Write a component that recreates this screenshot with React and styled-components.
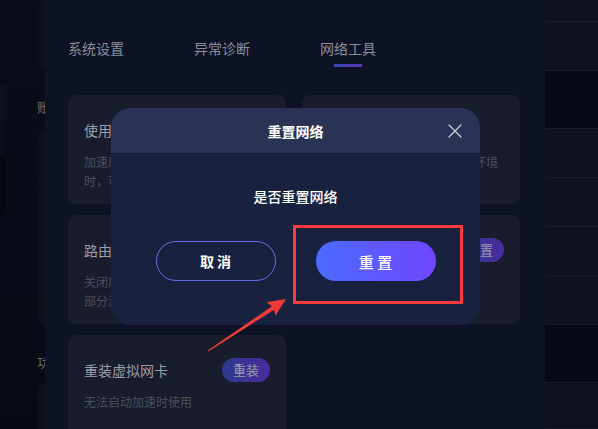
import styled, { createGlobalStyle } from "styled-components";

const GlobalStyle = createGlobalStyle`
  html, body {
    margin: 0;
    padding: 0;
    background: #080b15;
  }
  * {
    box-sizing: border-box;
  }
`;

const Screen = styled.div`
  position: relative;
  width: 598px;
  height: 429px;
  overflow: hidden;
  display: flex;
  background: linear-gradient(180deg, #0a0d19 0%, #070a13 100%);
  font-family: "Noto Sans CJK SC", "Noto Sans", sans-serif;
`;

/* ---- backdrop: the app behind the settings panel ---- */

const LeftRail = styled.div`
  width: 45px;
  flex: none;
  display: flex;
  justify-content: space-between;
`;

const EdgeStrip = styled.div`
  width: 5px;
  display: flex;
  flex-direction: column;
`;

const EdgeBlock = styled.div`
  height: ${(p) => p.$h}px;
  background: ${(p) => p.$bg};
`;

const GhostColumn = styled.div`
  width: 8px;
  overflow: hidden;
  display: flex;
  flex-direction: column;
`;

const GhostCard = styled.div`
  width: 80px;
  height: ${(p) => p.$h}px;
  flex: none;
  background: #0e1019;
  border-radius: 8px;
`;

const GhostLabel = styled.div`
  width: 80px;
  height: ${(p) => p.$h}px;
  flex: none;
  padding-top: 27px;
  font-size: 13px;
  line-height: 20px;
  color: #6b6e78;
  white-space: nowrap;
`;

const RightRail = styled.div`
  flex: 1;
  display: flex;
  flex-direction: column;
`;

const ListRow = styled.div`
  height: ${(p) => p.$h}px;
  flex: none;
  background: ${(p) => (p.$dark ? "#070a16" : "#0f121c")};
  border-bottom: 1px solid #191c27;
`;

/* ---- settings panel ---- */

const Panel = styled.div`
  width: 500px;
  flex: none;
  display: flex;
  flex-direction: column;
  background: #0d1225;
`;

const TopStrip = styled.div`
  height: 4px;
  background: #171c30;
`;

const Tabs = styled.div`
  display: flex;
  gap: 70px;
  padding: 0 23px;
  margin-top: 38px;
`;

const Tab = styled.div`
  display: flex;
  flex-direction: column;
  align-items: center;
  font-size: 14px;
  line-height: 20px;
  color: #8b8e99;

  &::after {
    content: "";
    width: 28px;
    height: 3px;
    margin-top: 6px;
    background: ${(p) =>
      p.$active ? "linear-gradient(90deg, #3848b6, #5733ad)" : "transparent"};
  }
`;

const Grid = styled.div`
  display: grid;
  grid-template-columns: 218px 218px;
  grid-auto-rows: 109px;
  gap: 11px 16px;
  padding: 0 23px;
  margin-top: 28px;
`;

const Card = styled.div`
  background: #191c2d;
  border-radius: 8px;
  padding: 25px 16px 0;
  display: flex;
  flex-direction: column;
`;

const CardHead = styled.div`
  height: 20px;
  display: flex;
  align-items: center;
  justify-content: space-between;
`;

const CardTitle = styled.div`
  font-size: 14px;
  line-height: 20px;
  color: #9c9ea8;
  white-space: nowrap;
`;

const CardDesc = styled.div`
  margin-top: 12px;
  font-size: 12px;
  line-height: 19px;
  color: #4b4e5d;
`;

const Toggle = styled.div`
  width: 36px;
  height: 16px;
  margin: -3px 8px 0 0;
  border-radius: 8px;
  background: #04050b;
`;

const PillButton = styled.button`
  width: 48px;
  height: 24px;
  flex: none;
  border: none;
  border-radius: 12px;
  padding: 0;
  background: linear-gradient(90deg, #2c3a8e, #4a2b9d);
  color: #9a9cac;
  font-family: inherit;
  font-size: 13px;
  line-height: 24px;
`;

/* ---- dialog ---- */

const Dialog = styled.div`
  position: absolute;
  left: 111px;
  top: 108px;
  width: 369px;
  height: 217px;
  border-radius: 20px;
  overflow: hidden;
  background: #18223f;
  display: flex;
  flex-direction: column;
`;

const DialogHeader = styled.div`
  height: 45px;
  flex: none;
  display: grid;
  grid-template-columns: 1fr auto 1fr;
  align-items: center;
  background: #2a3354;
`;

const DialogTitle = styled.div`
  grid-column: 2;
  font-size: 14px;
  font-weight: 700;
  line-height: 20px;
  color: #ffffff;
`;

const CloseButton = styled.button`
  justify-self: end;
  margin-right: 18px;
  width: 14px;
  height: 14px;
  padding: 0;
  border: none;
  background: none;
  display: flex;
`;

const DialogBody = styled.div`
  display: flex;
  flex-direction: column;
  align-items: center;
  padding-top: 33px;
`;

const Message = styled.div`
  font-size: 14px;
  font-weight: 500;
  line-height: 20px;
  color: #ffffff;
`;

const ButtonRow = styled.div`
  display: flex;
  gap: 40px;
  margin-top: 35px;
`;

const DialogButton = styled.button`
  width: 120px;
  height: 40px;
  border-radius: 20px;
  padding: 0;
  font-family: inherit;
  color: #ffffff;
  font-size: ${(p) => (p.$primary ? "15px" : "14px")};
  font-weight: ${(p) => (p.$primary ? 500 : 700)};
  border: ${(p) => (p.$primary ? "none" : "1px solid #6570e4")};
  background: ${(p) =>
    p.$primary ? "linear-gradient(90deg, #4b6bff, #7046ff)" : "transparent"};
`;

/* ---- annotation ---- */

const Highlight = styled.div`
  position: absolute;
  left: 293px;
  top: 225px;
  width: 170px;
  height: 79px;
  border: 3px solid #ff3b3b;
`;

const ArrowMark = styled.svg`
  position: absolute;
  left: 200px;
  top: 290px;
  width: 95px;
  height: 70px;
`;

const cards = [
  {
    title: "使用系统代理",
    desc: "加速后局域网设备或网页无法访问时，可尝试开启",
    control: "toggle",
  },
  {
    title: "兼容模式",
    desc: "开启后可优化游戏在复杂网络环境下的连接稳定性",
  },
  {
    title: "路由模式",
    desc: "关闭后将使用默认路由，可能导致部分游戏加速失效",
  },
  { title: "重置网络", desc: "网络异常时可尝试重置", button: "重置" },
  { title: "重装虚拟网卡", desc: "无法启动加速时使用", button: "重装" },
];

const listRows = [
  { h: 22 },
  { h: 49 },
  { h: 58, dark: true },
  { h: 49 },
  { h: 49 },
  { h: 49 },
  { h: 49 },
  { h: 58, dark: true },
  { h: 46 },
];

function App() {
  return (
    <>
      <GlobalStyle />
      <Screen>
        <LeftRail>
          <EdgeStrip>
            <EdgeBlock $h={85} $bg="transparent" />
            <EdgeBlock $h={70} $bg="#0c0f1d" />
            <EdgeBlock $h={60} $bg="#05070e" />
          </EdgeStrip>
          <GhostColumn>
            <GhostCard $h={70} />
            <GhostLabel $h={60}>账号设置</GhostLabel>
            <GhostCard $h={195} />
            <GhostLabel $h={58}>功能设置</GhostLabel>
            <GhostCard $h={60} />
          </GhostColumn>
        </LeftRail>

        <Panel>
          <TopStrip />
          <Tabs>
            <Tab>系统设置</Tab>
            <Tab>异常诊断</Tab>
            <Tab $active>网络工具</Tab>
          </Tabs>
          <Grid>
            {cards.map((c) => (
              <Card key={c.title}>
                <CardHead>
                  <CardTitle>{c.title}</CardTitle>
                  {c.control === "toggle" && <Toggle />}
                  {c.button && <PillButton>{c.button}</PillButton>}
                </CardHead>
                <CardDesc>{c.desc}</CardDesc>
              </Card>
            ))}
          </Grid>
        </Panel>

        <RightRail>
          {listRows.map((r, i) => (
            <ListRow key={i} $h={r.h} $dark={r.dark} />
          ))}
        </RightRail>

        <Dialog>
          <DialogHeader>
            <DialogTitle>重置网络</DialogTitle>
            <CloseButton aria-label="关闭">
              <svg width="14" height="14" viewBox="0 0 14 14">
                <path
                  d="M1 1L13 13M13 1L1 13"
                  stroke="#c9cdd9"
                  strokeWidth="1.3"
                  strokeLinecap="round"
                />
              </svg>
            </CloseButton>
          </DialogHeader>
          <DialogBody>
            <Message>是否重置网络</Message>
            <ButtonRow>
              <DialogButton>取 消</DialogButton>
              <DialogButton $primary>重 置</DialogButton>
            </ButtonRow>
          </DialogBody>
        </Dialog>

        <Highlight />
        <ArrowMark viewBox="200 290 95 70">
          <polygon
            points="207.7,350.6 271.9,306.3 266.6,302.3 286,299 275.4,315.7 274.1,309.7 208.3,351.4"
            fill="#f23a3a"
          />
        </ArrowMark>
      </Screen>
    </>
  );
}

export default App;
